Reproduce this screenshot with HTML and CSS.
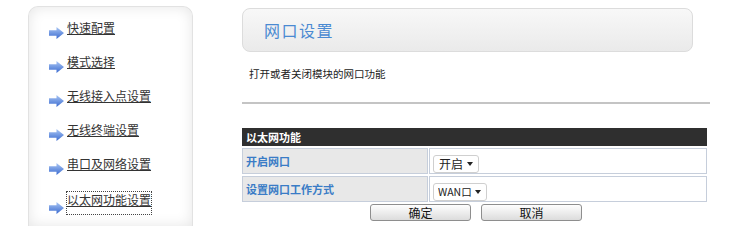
FILE: index.html
```html
<!DOCTYPE html>
<html lang="zh-CN">

<head>
    <meta charset="UTF-8">
    <title>网口设置</title>
    <link rel="stylesheet" href="styles.css">
</head>

<body>
    <!-- 箭头图标 -->
    <svg class="defs" width="0" height="0">
        <defs>
            <linearGradient id="arrowFill" x1="0" y1="0" x2="0" y2="1">
                <stop offset="0" stop-color="#a9c6f4" />
                <stop offset="1" stop-color="#3b6bd0" />
            </linearGradient>
            <symbol id="arrow" viewBox="0 0 14 11">
                <path d="M0 3 H7 V0 L14 5.5 L7 11 V8 H0 Z" fill="url(#arrowFill)" />
            </symbol>
        </defs>
    </svg>

    <div class="page">
        <!-- 左侧菜单 -->
        <aside class="sidebar">
            <ul class="menu">
                <li><svg class="arrow"><use href="#arrow" /></svg><a href="#">快速配置</a></li>
                <li><svg class="arrow"><use href="#arrow" /></svg><a href="#">模式选择</a></li>
                <li><svg class="arrow"><use href="#arrow" /></svg><a href="#">无线接入点设置</a></li>
                <li><svg class="arrow"><use href="#arrow" /></svg><a href="#">无线终端设置</a></li>
                <li><svg class="arrow"><use href="#arrow" /></svg><a href="#">串口及网络设置</a></li>
                <li><svg class="arrow"><use href="#arrow" /></svg><a href="#" class="current">以太网功能设置</a></li>
            </ul>
        </aside>

        <!-- 右侧内容 -->
        <main class="content">
            <div class="title-box">
                <h1>网口设置</h1>
            </div>
            <p class="desc">打开或者关闭模块的网口功能</p>
            <hr class="divider">

            <form id="ethForm">
                <table class="setting-table">
                    <thead>
                        <tr>
                            <th colspan="2">以太网功能</th>
                        </tr>
                    </thead>
                    <tbody>
                        <tr>
                            <td class="label">开启网口</td>
                            <td class="value">
                                <span class="select-wrap">
                                    <select class="onoff" name="eth_enable">
                                        <option>开启</option>
                                        <option>关闭</option>
                                    </select>
                                </span>
                            </td>
                        </tr>
                        <tr>
                            <td class="label">设置网口工作方式</td>
                            <td class="value">
                                <span class="select-wrap">
                                    <select class="mode" name="eth_mode">
                                        <option>WAN口</option>
                                        <option>LAN口</option>
                                    </select>
                                </span>
                            </td>
                        </tr>
                    </tbody>
                </table>
                <div class="buttons">
                    <button type="submit">确定</button>
                    <button type="reset">取消</button>
                </div>
            </form>
        </main>
    </div>
</body>

</html>
```

FILE: styles.css
```css
body {
    margin: 0;
    background-color: #fff;
    color: #333;
    font-family: "Noto Sans CJK SC", "Liberation Sans", sans-serif;
    overflow: hidden;
}

.defs {
    position: absolute;
}

.page {
    display: flex;
    align-items: flex-start;
    gap: 49px;
    padding-left: 28px;
}

/* 左侧菜单 */
.sidebar {
    box-sizing: border-box;
    width: 165px;
    height: 220px;
    margin-top: 6px;
    border: 1px solid #e2e2e2;
    border-bottom: none;
    border-radius: 10px 10px 0 0;
    background-color: #fff;
    box-shadow: inset 0 0 14px rgba(0, 0, 0, 0.1);
}

.menu {
    list-style: none;
    margin: 0;
    padding: 4px 0 0 20px;
}

.menu>li {
    display: flex;
    align-items: center;
    height: 34px;
}

.menu>li:last-child {
    margin-top: 5px;
}

.arrow {
    flex-shrink: 0;
    width: 15px;
    height: 12px;
    margin-top: 9px;
    margin-right: 3px;
}

.menu a {
    font-size: 12px;
    line-height: 16px;
    color: #333;
    text-decoration: underline;
}

.menu a.current {
    display: inline-block;
    height: 22px;
    outline: 1px dotted #444;
}

/* 右侧内容 */
.content {
    width: 468px;
    padding-top: 8px;
}

.title-box {
    box-sizing: border-box;
    display: flex;
    align-items: center;
    width: 451px;
    height: 44px;
    padding-left: 21px;
    border: 1px solid #dcdcdc;
    border-radius: 8px;
    background: linear-gradient(#f8f8f8, #eaeaea);
}

.title-box>h1 {
    margin: 0;
    font-size: 16px;
    font-weight: normal;
    letter-spacing: 1.5px;
    color: #4a8ad2;
}

.desc {
    margin: 15px 0 0 7px;
    font-size: 10.5px;
    line-height: 14px;
    color: #222;
}

.divider {
    width: 468px;
    margin: 21px 0 0;
    border: 0;
    border-top: 2px solid #c4c4c4;
}

.setting-table {
    width: 467px;
    margin: 22px 0 0 -1px;
    border-collapse: separate;
    border-spacing: 1px 2px;
}

.setting-table th {
    height: 18px;
    padding: 0 4px;
    background-color: #2f2f2f;
    color: #fff;
    font-size: 11px;
    font-weight: bold;
    text-align: left;
}

.setting-table td {
    height: 22px;
    padding: 0 0 0 3px;
    border: 1px solid #c6cedb;
}

.setting-table td.label {
    width: 181px;
    background-color: #e8e8e8;
    color: #3a7cc6;
    font-size: 11px;
    font-weight: bold;
}

.setting-table td.value {
    background-color: #fff;
}

.select-wrap {
    position: relative;
    display: inline-block;
    vertical-align: middle;
}

.select-wrap>select {
    appearance: none;
    display: block;
    height: 18px;
    padding: 0 0 0 5px;
    border: 1px solid #cfcfcf;
    border-radius: 3px;
    background-color: #fff;
    color: #222;
    font-family: inherit;
    font-size: 12px;
    line-height: 16px;
}

.select-wrap>select.onoff {
    width: 46px;
}

.select-wrap>select.mode {
    width: 54px;
    padding-left: 4px;
    font-size: 10.5px;
}

.select-wrap::after {
    content: "";
    position: absolute;
    right: 6px;
    top: 7px;
    border-left: 3.5px solid transparent;
    border-right: 3.5px solid transparent;
    border-top: 4px solid #222;
    pointer-events: none;
}

.buttons {
    display: flex;
    justify-content: center;
    gap: 10px;
}

.buttons>button {
    width: 101px;
    height: 17px;
    padding: 0;
    border: 1px solid #8e8e8e;
    border-radius: 3px;
    background: linear-gradient(#fefefe, #dcdcdc);
    color: #111;
    font-family: inherit;
    font-size: 12px;
    line-height: 15px;
    cursor: pointer;
}
```
